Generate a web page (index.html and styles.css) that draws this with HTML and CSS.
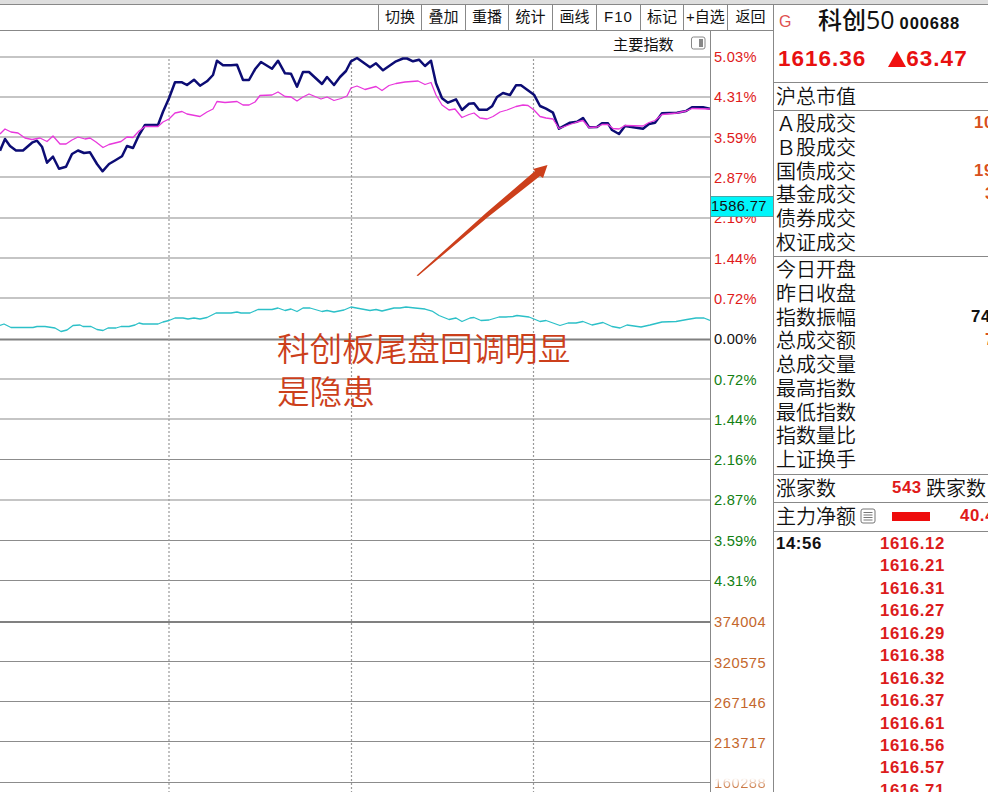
FILE: index.html
```html
<!DOCTYPE html>
<html lang="zh-CN">
<head>
    <meta charset="UTF-8">
    <meta name="viewport" content="width=device-width, initial-scale=1.0">
    <title>科创50 000688</title>
    <link rel="stylesheet" href="styles.css">
</head>
<body>
<div class="window">
    <div class="main">
        <!-- Toolbar -->
        <div class="toolbar">
            <span class="tool">切换</span>
            <span class="tool">叠加</span>
            <span class="tool">重播</span>
            <span class="tool">统计</span>
            <span class="tool">画线</span>
            <span class="tool latin">F10</span>
            <span class="tool">标记</span>
            <span class="tool">+自选</span>
            <span class="tool">返回</span>
        </div>

        <div class="chart-area">
            <!-- Chart -->
            <svg class="chart" viewBox="0 31 710 761" width="710" height="761">
                <path class="grid" d="M0 57H710M0 97H710M0 137H710M0 177H710M0 218H710M0 258H710M0 298H710M0 379H710M0 419H710M0 459.5H710M0 500H710M0 540.5H710M0 580.5H710M0 661.5H710M0 701.5H710M0 741.5H710M0 782.5H710"/>
                <path class="grid-bold" d="M0 339.5H710M0 622H710"/>
                <path class="grid-dots" d="M169 59V792M351.5 59V792M533.5 59V792"/>

                <polyline class="line cyan" points="0,325.5 4,324 11,327.5 33,327.5 37,326.5 45,326.5 55,328 61,331.5 67,330 73,325.5 80,325 83,326.5 91,326.5 97,329.5 103,330.5 108,328 116,328 121,326.5 129,326.5 135,325 139,323 143,324 158,324 163,322 169,320.5 175,318 183,318 188,319 194,318 200,319 207,317.5 212,315 216,313 231,313 237,312 241,313 250,313 258,309.5 272,309.5 278,308 285,310.5 291,309 297,311.5 303,308 310,308 322,311.5 327,310.5 334,312 344,310 351,307 370,310.5 376,309.5 382,311 394,308 400,308 406,307 415,308 425,309 432,311 439,315.5 449,319.5 456,318 462,321.5 470,318 474,317.5 481,320.5 489,320 499,317 506,317 513,316.5 517,315.5 529,317 534,319 540,321.5 546,320.5 560,325.5 568,323 576,323 583,321.5 592,325 603,322.5 612,326.5 620,328 627,325 641,327 650,325 662,322 676,321.5 687,319.5 696,318 704,318 710,320.5"/>
                <polyline class="line navy" points="0,150.7 5,139 10,146 16,150.5 23,150.5 32,142.7 37,140.7 42,146.7 47,162.7 53,156.7 59,168.7 66,166.7 72,154 78,150.5 84,153 90,152.3 97,164 102.5,171.3 109,164 115,160.5 122,156.3 127,146 133,148 139,135 145,125 158,125 163,111.7 169,98.3 175,82.3 182,82.3 187,85 194,79.7 200,85.7 207,81.3 213,75 217,60.7 223,65.3 231,65.3 237,64.7 243,80 249,80 255,69.3 261,62 272,68.7 278,60.7 285,73.3 291,73.7 297,86.7 303,72 309,72 322,84 327,77 334,85 340,77 346,71 351,61.3 357,58 370,67.3 376,63.3 383,70.3 396,61.3 403,58.5 407,58.5 413,61.3 419,59.7 425,66 431,60.7 436,83.3 442,98.3 448,102.7 456,99.3 462,110 469,103.7 474,103.3 479,109.7 487,109.7 492,106.3 497,97 503,93 510,95 516,85.3 521,85.3 534,94.7 540,106 546,108.7 553,112.7 559,128.7 570,122.7 577,121.7 583,118 589,127.3 597,127 602,123.3 608,123.3 612,130 619,134 625,126 643,128.7 649,124 655,122.7 662,113.3 677,112.7 686,111 692,107.3 703,107.3 710,108.7"/>
                <polyline class="line magenta" points="0,134 5,129 11,132 18,133 25,138 32,139.5 40,138 47,141.5 53,136 60,144 66,144 72,140 78,137 85,139 90,138 96,142 103,147.5 109,144.5 115,143 121,141.5 127,137 133,137.5 139,131 145,126.5 158,126.5 163,122 169,119 175,113 182,111.5 187,114 200,116.5 207,112 213,109 217,101.5 225,102.5 237,101.5 243,105 249,105 255,102 260,95.5 272,95 278,92 285,96.5 291,97 297,101 303,97 309,94 315,96.5 321,99 327,97 334,100.5 341,98.5 347,96 351,88 357,86 365,89.5 376,86.5 382,90.5 389,85.5 396,83.5 405,82 418,81 425,84.5 431,82.5 436,95 442,105 449,110 455,109 462,117.5 469,114.5 474,113 480,118 487,119 493,116.5 500,112 507,110 516,106.5 523,105 528,105.5 534,110 540,116.5 546,118 553,119 559,128.5 570,124.5 577,122 583,120.5 589,127.5 597,127 602,124.5 608,124.5 613,128.5 619,129 625,125.5 643,126 649,122.5 655,120.5 662,114.5 677,113 686,111 692,108.5 710,109"/>

                <polygon class="arrow" points="416.5,275.5 486,213 535,171 533,169 547.5,165 543,178 540,176 488,217 418,276"/>
                <text class="note" x="277" y="361">科创板尾盘回调明显</text>
                <text class="note" x="277" y="404">是隐患</text>

                <text class="caption" x="613" y="50">主要指数</text>
                <rect class="toggle" x="691.5" y="37" width="13.5" height="12" rx="2"/>
                <rect class="toggle-bar" x="699" y="39" width="4" height="8"/>
            </svg>

            <!-- Price axis -->
            <div class="axis">
                <div class="scale">
                    <span class="up">5.03%</span>
                    <span class="up">4.31%</span>
                    <span class="up">3.59%</span>
                    <span class="up">2.87%</span>
                    <span class="up">2.16%</span>
                    <span class="up">1.44%</span>
                    <span class="up">0.72%</span>
                    <span>0.00%</span>
                    <span class="down">0.72%</span>
                    <span class="down">1.44%</span>
                    <span class="down">2.16%</span>
                    <span class="down">2.87%</span>
                    <span class="down">3.59%</span>
                    <span class="down">4.31%</span>
                </div>
                <div class="scale volume">
                    <span>374004</span>
                    <span>320575</span>
                    <span>267146</span>
                    <span>213717</span>
                    <span class="faded">160288</span>
                </div>
                <div class="cursor-price">1586.77</div>
            </div>
        </div>
    </div>

    <!-- Quote panel -->
    <div class="quote">
        <div class="head">
            <div class="title"><span class="flag">G</span><span class="name">科创<span class="fifty">50</span></span><span class="code">000688</span></div>
            <div class="price">
                <span>1616.36</span>
                <svg class="triangle" width="18" height="16" viewBox="0 0 18 16"><path d="M9 0L18 16H0z"/></svg>
                <span>63.47</span>
            </div>
        </div>
        <div class="section cap"><div class="row">沪总市值</div></div>
        <div class="section turnover">
            <div class="row">Ａ股成交<b class="orange">10</b></div>
            <div class="row">Ｂ股成交</div>
            <div class="row">国债成交<b class="orange">19</b></div>
            <div class="row">基金成交<b class="orange edge">3</b></div>
            <div class="row">债券成交</div>
            <div class="row">权证成交</div>
        </div>
        <div class="section stats">
            <div class="row">今日开盘</div>
            <div class="row">昨日收盘</div>
            <div class="row">指数振幅<b class="range">74</b></div>
            <div class="row">总成交额<b class="orange edge">7</b></div>
            <div class="row">总成交量</div>
            <div class="row">最高指数</div>
            <div class="row">最低指数</div>
            <div class="row">指数量比</div>
            <div class="row">上证换手</div>
        </div>
        <div class="section breadth"><div class="row">涨家数<b class="count">543</b><span>跌家数</span></div></div>
        <div class="section flow">
            <div class="row">主力净额
                <svg class="list-icon" width="16" height="16" viewBox="0 0 16 16"><rect x="1" y="1" width="14" height="14" rx="2"/><path d="M3.5 4.5H12.5M3.5 7H12.5M3.5 9.5H12.5M3.5 12H12.5"/></svg>
                <i class="bar"></i>
                <b class="net">40.4</b>
            </div>
        </div>
        <div class="ticks">
            <span class="time">14:56</span>
            <div class="prices">
                <span>1616.12</span>
                <span>1616.21</span>
                <span>1616.31</span>
                <span>1616.27</span>
                <span>1616.29</span>
                <span>1616.38</span>
                <span>1616.32</span>
                <span>1616.37</span>
                <span>1616.61</span>
                <span>1616.56</span>
                <span>1616.57</span>
                <span>1616.71</span>
            </div>
        </div>
    </div>
</div>
</body>
</html>
```
FILE: styles.css
```css
* {
    box-sizing: border-box;
}
body {
    margin: 0;
    background-color: #fff;
    color: #111;
    font-family: "Liberation Sans", "Noto Sans CJK SC", sans-serif;
    overflow: hidden;
}
.window {
    display: flex;
    width: 988px;
    height: 792px;
    border-top: 4px solid #dedede;
    overflow: hidden;
}
.main {
    width: 773px;
    flex: none;
}

/* Toolbar */
.toolbar {
    display: grid;
    grid-template-columns: 43px 44px 43px 44px 44px 44px 43px 44px 46px;
    justify-content: end;
    height: 27px;
    border-top: 1px solid #888;
    border-bottom: 1px solid #888;
}
.tool {
    border-left: 1px solid #888;
    font-size: 15px;
    line-height: 24px;
    text-align: center;
    white-space: nowrap;
}
.tool.latin {
    letter-spacing: 1px;
}

/* Chart */
.chart-area {
    display: flex;
    height: 761px;
}
.chart {
    display: block;
    flex: none;
}
.grid {
    stroke: #8c8c8c;
    stroke-width: 1.2;
}
.grid-bold {
    stroke: #808080;
    stroke-width: 2;
}
.grid-dots {
    stroke: #999;
    stroke-width: 1.2;
    stroke-dasharray: 2 2;
}
.line {
    fill: none;
    stroke-linejoin: round;
}
.navy {
    stroke: #0c0c74;
    stroke-width: 2.5;
}
.magenta {
    stroke: #e838dc;
    stroke-width: 1.3;
}
.cyan {
    stroke: #2cc0c8;
    stroke-width: 1.3;
}
.arrow {
    fill: #cc3f1b;
}
.note {
    fill: #cc3f1b;
    font-family: "Noto Sans CJK SC", sans-serif;
    font-size: 32.6px;
    font-weight: 350;
}
.caption {
    fill: #111;
    font-size: 15.2px;
}
.toggle {
    fill: #fff;
    stroke: #888;
}
.toggle-bar {
    fill: #888;
}

/* Axis */
.axis {
    position: relative;
    width: 63px;
    height: 761px;
    padding-top: 6px;
    border-left: 1px solid #888;
    overflow: hidden;
}
.scale {
    display: grid;
    grid-auto-rows: 40.3px;
    align-items: center;
    padding-left: 3px;
    font-size: 14.7px;
    letter-spacing: 0.2px;
}
.scale.volume {
    padding-top: 1px;
    color: #c4672c;
    letter-spacing: 0.55px;
}
.up {
    color: #e01a1a;
}
.down {
    color: #128012;
}
.faded {
    background: linear-gradient(#fff 20%, #c4672c 85%);
    background-clip: text;
    color: transparent;
}
.cursor-price {
    position: absolute;
    top: 165px;
    left: 0;
    width: 63px;
    height: 21px;
    background-color: #00f6fa;
    border: 1px solid #4aa;
    border-left: none;
    font-size: 14.7px;
    line-height: 18px;
    letter-spacing: 0.4px;
}

/* Quote panel */
.quote {
    flex: 1;
    min-width: 0;
    border-top: 1px solid #888;
    border-left: 1px solid #888;
    overflow: hidden;
}
.head {
    height: 77px;
    color: #e81010;
}
.title {
    display: flex;
    align-items: center;
    height: 33px;
    padding-left: 5px;
    color: #111;
}
.flag {
    width: 39px;
    color: #e05050;
    font-size: 16px;
}
.name {
    padding-bottom: 4px;
    font-size: 24px;
    font-weight: 500;
    line-height: 30px;
}
.fifty {
    font-family: "Open Sans", sans-serif;
    font-size: 25px;
    font-weight: 500;
}
.code {
    padding: 4px 0 0 5px;
    font-size: 16.5px;
    font-weight: bold;
    letter-spacing: 0.9px;
}
.price {
    display: flex;
    align-items: center;
    height: 42px;
    padding-left: 4px;
    font-size: 22.5px;
    font-weight: bold;
    letter-spacing: 1px;
}
.triangle {
    margin-left: 22px;
    fill: #f01010;
}
.section {
    border-top: 1px solid #888;
    overflow: hidden;
}
.row {
    display: flex;
    align-items: center;
    height: 23.8px;
    padding: 0 0 2px 2px;
    font-family: "Noto Sans CJK SC", sans-serif;
    font-size: 20px;
    font-weight: 350;
    line-height: 22px;
    white-space: nowrap;
}
.row b {
    font-family: "Liberation Sans", sans-serif;
    font-size: 16.8px;
    font-weight: bold;
    letter-spacing: 0.6px;
}
.cap .row {
    height: 27px;
}
.turnover {
    height: 146px;
    padding-top: 1px;
}
.stats {
    height: 218px;
    padding-top: 1px;
}
.breadth .row {
    height: 27px;
}
.flow .row {
    height: 28px;
}
.orange {
    margin-left: 118px;
    color: #d8501c;
}
.orange.edge {
    margin-left: 129px;
}
.range {
    margin-left: 115px;
}
.count {
    width: 34px;
    margin-left: 56px;
    color: #e01a1a;
}
.list-icon {
    flex: none;
    margin-left: 4px;
    fill: #fff;
    stroke: #777;
}
.bar {
    flex: none;
    width: 38px;
    height: 9px;
    margin: 0 30px 0 16px;
    background-color: #ee0c0c;
}
.net {
    color: #e01a1a;
}

/* Ticks */
.ticks {
    display: flex;
    padding: 1px 0 0 2px;
    border-top: 1px solid #888;
    font-size: 16.8px;
    font-weight: bold;
    line-height: 22px;
    letter-spacing: 0.6px;
}
.time {
    width: 104px;
}
.prices {
    display: grid;
    grid-auto-rows: 22.45px;
    color: #dc1c1c;
}
```
